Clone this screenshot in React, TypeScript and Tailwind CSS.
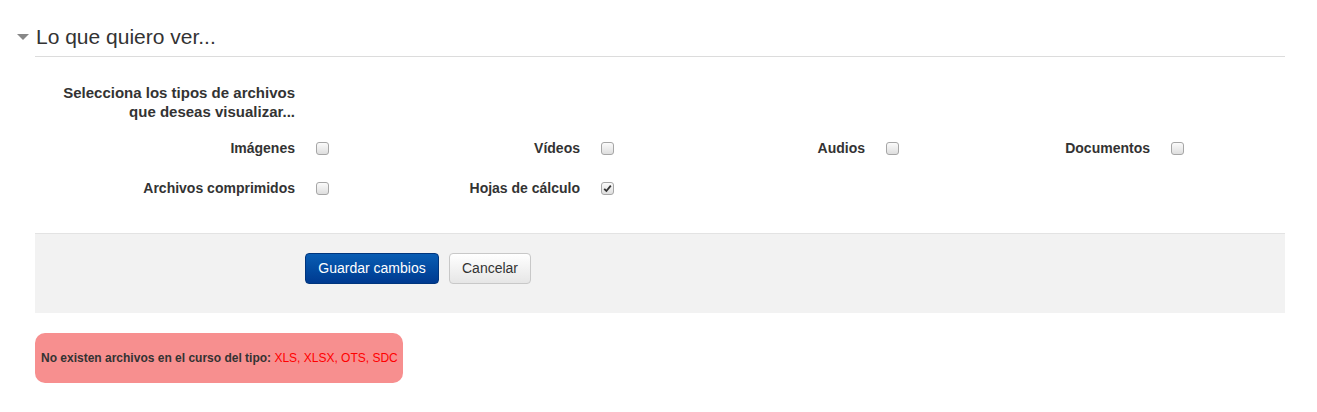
import React from 'react';

interface FileType {
  label: string;
  checked: boolean;
}

const rows: FileType[][] = [
  [
    { label: 'Imágenes', checked: false },
    { label: 'Vídeos', checked: false },
    { label: 'Audios', checked: false },
    { label: 'Documentos', checked: false },
  ],
  [
    { label: 'Archivos comprimidos', checked: false },
    { label: 'Hojas de cálculo', checked: true },
  ],
];

const Checkbox: React.FC<{ checked: boolean }> = ({ checked }) => (
  <span className="ml-[21px] flex h-[13px] w-[13px] shrink-0 items-center justify-center rounded-[3px] border border-[#a6a6a6] bg-gradient-to-b from-[#fbfbfb] to-[#dedede]">
    {checked && (
      <svg width="9" height="9" viewBox="0 0 9 9">
        <path d="M1.2 4.8 L3.4 7 L7.8 1.6" fill="none" stroke="#333" strokeWidth="1.8" />
      </svg>
    )}
  </span>
);

export default function App() {
  return (
    <div className="h-[412px] w-[1317px] bg-white font-['Liberation_Sans',Arial,sans-serif] text-[#333]">
      <div className="ml-[35px] w-[1250px]">
        {/* Legend */}
        <div className="pt-[17px]">
          <div className="relative h-[40px] border-b border-[#dcdcdc] text-[21px] leading-[40px] text-[#333]">
            <span className="absolute left-[-18px] top-[17px] h-0 w-0 border-x-[6px] border-t-[6px] border-x-transparent border-t-[#888]" />
            <span className="pl-[1px]">Lo que quiero ver...</span>
          </div>
        </div>

        {/* Intro */}
        <div className="mt-[26px] w-[260px] whitespace-nowrap text-right text-[15px] font-bold leading-[19px]">
          Selecciona los tipos de archivos
          <br />
          que deseas visualizar...
        </div>

        {/* Checkboxes */}
        <div className="mt-[17px] flex flex-col gap-[20px]">
          {rows.map((row, i) => (
            <div key={i} className="flex h-[20px]">
              {row.map((item) => (
                <div key={item.label} className="flex w-[285px] shrink-0 items-center">
                  <span className="w-[260px] shrink-0 text-right text-[14px] font-bold leading-[20px]">{item.label}</span>
                  <Checkbox checked={item.checked} />
                </div>
              ))}
            </div>
          ))}
        </div>

        {/* Footer buttons */}
        <div className="mt-[35px] flex h-[80px] gap-[10px] border-t border-[#e3e3e3] bg-[#f2f2f2] pl-[270px] pt-[19px]">
          <button className="h-[31px] w-[134px] rounded-[4px] border border-[#00357d] bg-gradient-to-b from-[#0a5db3] to-[#003a90] text-[14px] text-white">
            Guardar cambios
          </button>
          <button className="h-[31px] w-[82px] rounded-[4px] border border-[#c8c8c8] bg-gradient-to-b from-white to-[#e6e6e6] text-[14px] text-[#333]">
            Cancelar
          </button>
        </div>

        {/* Alert */}
        <div className="mt-[20px] flex h-[50px] w-[368px] items-center rounded-[10px] bg-[#f78f8f] px-[6px] text-[12px] font-bold">
          <span className="whitespace-nowrap">
            No existen archivos en el curso del tipo:{' '}
            <span className="font-normal text-[#ff0000]">XLS, XLSX, OTS, SDC</span>
          </span>
        </div>
      </div>
    </div>
  );
}
